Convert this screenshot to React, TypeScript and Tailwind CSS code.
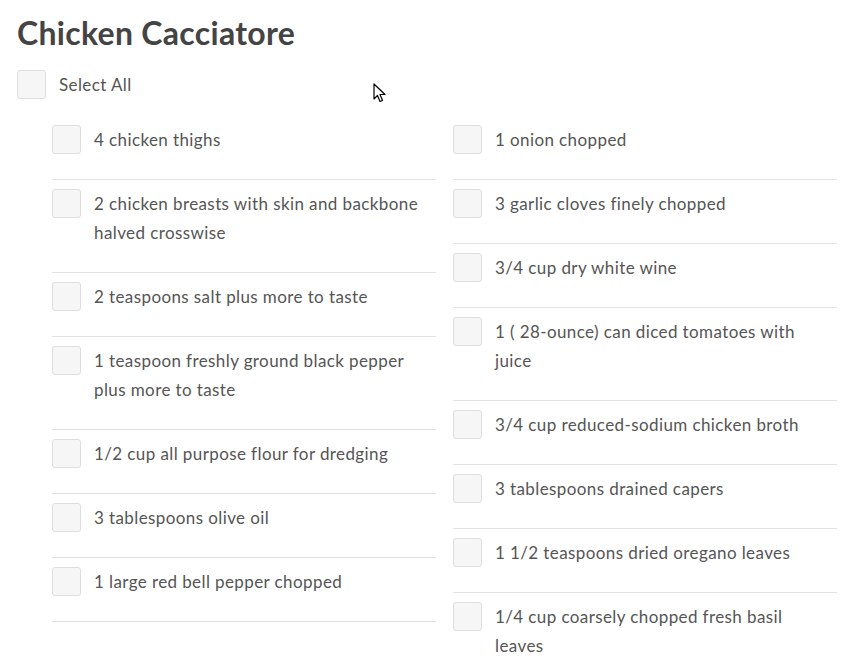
import { useState } from "react";

const LEFT = [
  "4 chicken thighs",
  "2 chicken breasts with skin and backbone halved crosswise",
  "2 teaspoons salt plus more to taste",
  "1 teaspoon freshly ground black pepper plus more to taste",
  "1/2 cup all purpose flour for dredging",
  "3 tablespoons olive oil",
  "1 large red bell pepper chopped",
];

const RIGHT = [
  "1 onion chopped",
  "3 garlic cloves finely chopped",
  "3/4 cup dry white wine",
  "1 ( 28-ounce) can diced tomatoes with juice",
  "3/4 cup reduced-sodium chicken broth",
  "3 tablespoons drained capers",
  "1 1/2 teaspoons dried oregano leaves",
  "1/4 cup coarsely chopped fresh basil leaves",
];

function Box({ checked, onClick }: { checked: boolean; onClick: () => void }) {
  return (
    <button
      type="button"
      onClick={onClick}
      className="w-[29px] h-[29px] shrink-0 rounded-[3px] border border-[#dedede] bg-[#f6f6f6] flex items-center justify-center text-[#555] text-sm"
    >
      {checked ? "✓" : ""}
    </button>
  );
}

export default function App() {
  const [checked, setChecked] = useState<Record<string, boolean>>({});
  const all = [...LEFT, ...RIGHT];
  const allChecked = all.every((i) => checked[i]);

  function toggle(item: string) {
    setChecked((prev) => ({ ...prev, [item]: !prev[item] }));
  }

  function toggleAll() {
    const next: Record<string, boolean> = {};
    all.forEach((i) => (next[i] = !allChecked));
    setChecked(next);
  }

  function column(items: string[]) {
    return (
      <div className="flex flex-col">
        {items.map((item, i) => (
          <div
            key={item}
            className={`flex items-start gap-[13px] pb-[25px] border-b border-[#e3e3e3] ${i === 0 ? "" : "pt-[9px]"}`}
          >
            <Box checked={!!checked[item]} onClick={() => toggle(item)} />
            <span className="leading-[29px] pr-[6px]">{item}</span>
          </div>
        ))}
      </div>
    );
  }

  return (
    <div className="relative w-[850px] h-[658px] overflow-hidden bg-white font-['Lato',sans-serif] text-[17px] tracking-[0.4px] text-[#555]">
      <div className="pl-[17px] pt-[14px]">
        <h1 className="text-[32px] leading-[38px] font-bold tracking-[0.3px] text-[#444]">Chicken Cacciatore</h1>

        <div className="mt-[18px] flex items-center gap-[13px]">
          <Box checked={allChecked} onClick={toggleAll} />
          <span>Select All</span>
        </div>

        <div className="mt-[26px] ml-[35px] w-[785px] grid grid-cols-2 gap-x-[17px] items-start">
          {column(LEFT)}
          {column(RIGHT)}
        </div>
      </div>

      {/* mouse pointer */}
      <svg className="absolute left-[373px] top-[83px]" width="14" height="21" viewBox="0 0 14 21">
        <path d="M1 1 L1 16 L4.5 12.5 L7 18.5 L9.5 17.5 L7 11.5 L12 11.5 Z" fill="white" stroke="black" strokeWidth="1.2" strokeLinejoin="round" />
      </svg>
    </div>
  );
}
